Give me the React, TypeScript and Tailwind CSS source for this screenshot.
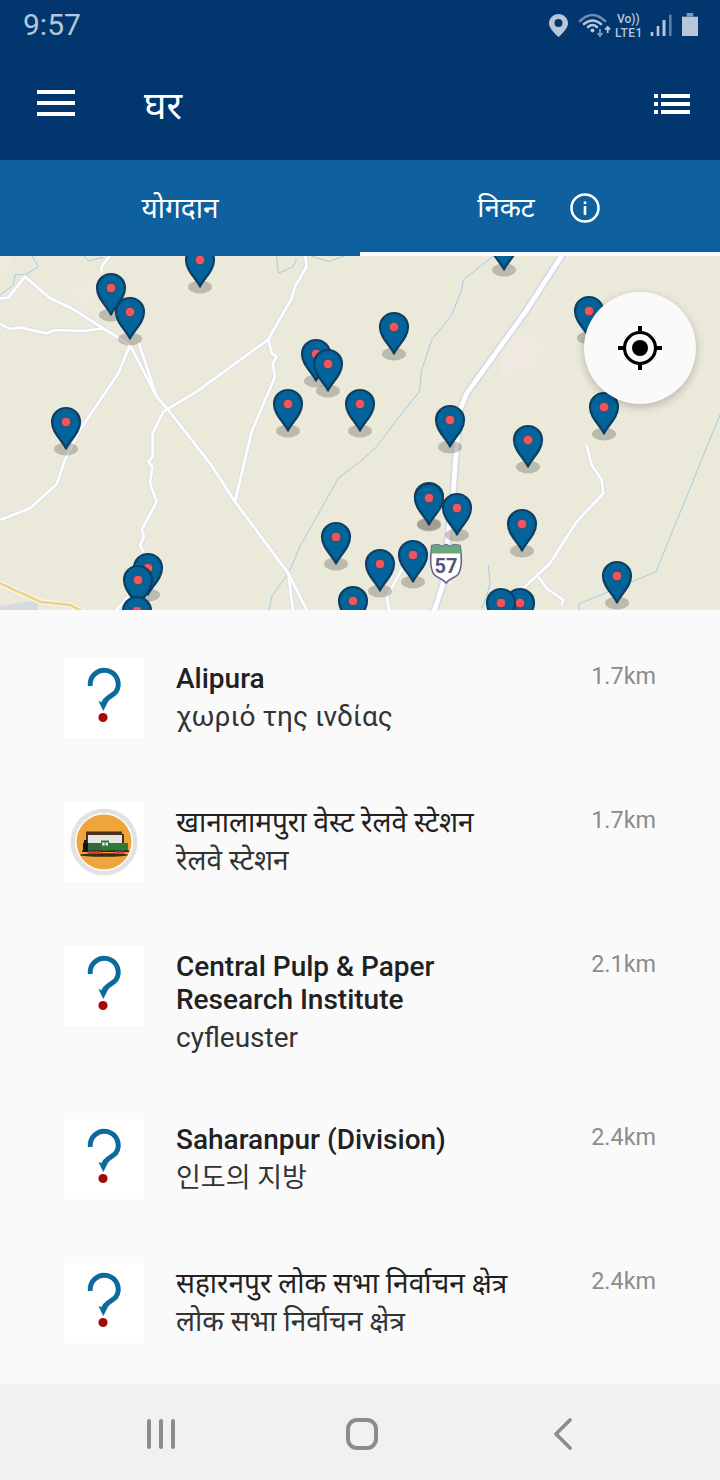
const pins: [number, number][] = [
  [504, 243], [200, 260], [111, 288], [589, 311], [130, 312], [394, 327], [316, 354], [328, 364],
  [288, 404], [360, 404], [604, 407], [450, 420], [66, 422], [528, 440], [429, 497], [429, 498], [457, 508],
  [522, 524], [336, 537], [413, 555], [148, 568], [380, 564], [617, 576], [138, 580], [353, 601],
  [520, 603], [501, 603], [137, 611],
];

const roadsLeft = [
  "M0 145L25 143L75 80L150 145L215 175L310 235L390 285L470 440L505 480L630 640L705 755L865 970L880 1090",
  "M865 970L925 1090",
  "M0 222L30 237L60 232L140 250L165 240L250 243L310 235",
  "M0 810L90 775L170 703L195 630L240 540L355 370L390 285",
  "M415 275L470 440",
  "M915 10L920 50L885 110L875 145L805 268L590 425L490 485L458 550L458 620L445 635L457 650L450 700L470 755L425 840L432 860L420 885L430 905",
  "M805 268L815 310L830 320L818 340L825 380L755 545L705 755",
  "M335 10L305 50L305 68",
  "M345 1085L385 1040",
];
const waterLeft = [
  "M0 135L40 105L45 75L80 72L115 50L95 15",
  "M250 15L265 32L310 22",
  "M830 15L835 70L880 50L890 25",
  "M925 15L985 35L1040 15",
  "M1080 635L1015 685L900 890L865 970L815 1040L805 1090",
];
const roadsRight = [
  "M90 1090L80 1040L130 950",
  "M680 585L695 645L725 690L730 730L650 815L570 940L490 1015L460 1040",
  "M535 980L560 1015L610 1050L605 1065",
];
const waterRight = [
  "M400 18L310 90L305 120L275 195L215 270L185 360L178 425L110 510L50 590L0 635",
  "M1090 470L888 965L655 1063L660 1090",
  "M385 945L390 1000L380 1040L365 1075",
];

function MapCanvas() {
  return (
    <svg viewBox="0 256 720 354" className="block w-full h-[354px]">
      <rect x="0" y="256" width="720" height="354" fill="#ebe9d9" />
      <path d="M0 256H12L8 275L0 278Z" fill="#efe9e0" />
      <path d="M70 293L100 270L97 293L80 307Z" fill="#efe9e0" />
      <path d="M500 343L527 333L545 347L537 367L500 378Z" fill="#efe9e0" />
      <path d="M0 606L38 600V610H0Z" fill="#d7d9e0" />
      <g transform="translate(0 250) scale(.33333)" fill="none" strokeLinejoin="round">
        {waterLeft.map((d) => <path key={d} d={d} stroke="#a4cbe3" strokeWidth="3" />)}
        {roadsLeft.map((d) => <path key={d} d={d} stroke="#d9dde8" strokeWidth="13" />)}
        {roadsLeft.map((d) => <path key={d + "w"} d={d} stroke="#ffffff" strokeWidth="8" />)}
        <path d="M0 1000L120 1055L210 1065L250 1085" stroke="#ffffff" strokeWidth="14" />
        <path d="M0 1000L120 1055L210 1065L250 1085" stroke="#ecd48e" strokeWidth="9" />
      </g>
      <g transform="translate(360 250) scale(.33333)" fill="none" strokeLinejoin="round">
        {waterRight.map((d) => <path key={d} d={d} stroke="#a4cbe3" strokeWidth="3" />)}
        {roadsRight.map((d) => <path key={d} d={d} stroke="#d9dde8" strokeWidth="13" />)}
        {roadsRight.map((d) => <path key={d + "w"} d={d} stroke="#ffffff" strokeWidth="8" />)}
        <path d="M610 10L500 180L320 430L300 480L285 650L280 730L265 850L250 1000L220 1090" stroke="#d5d9e6" strokeWidth="24" />
        <path d="M610 10L500 180L320 430L300 480L285 650L280 730L265 850L250 1000L220 1090" stroke="#ffffff" strokeWidth="14" />
      </g>
      {pins.map(([x, y]) => (
        <ellipse key={`s${x}-${y}`} cx={x} cy={y + 27} rx="12" ry="6.5" fill="#7c7a6e" fillOpacity="0.42" />
      ))}
      {pins.map(([x, y]) => (
        <g key={`${x}-${y}`} transform={`translate(${x} ${y})`}>
          <path d="M0 26.5C-3 19 -14 11 -14 0A14 14 0 0 1 14 0C14 11 3 19 0 26.5Z" fill="#03649c" stroke="#0c3f63" strokeWidth="2.200" strokeLinejoin="round" />
          <circle r="4.8" fill="#f4545a" stroke="#1c4a6b" strokeWidth="0.8" />
        </g>
      ))}
      <g transform="translate(446 563.500)">
        <path d="M-14 -18L-8 -19L-4 -17L0 -19L4 -17L8 -19L14 -18C16 -6 16 5 12 11C8 15 3 15 0 19.500C-3 15 -8 15 -12 11C-16 5 -16 -6 -14 -18Z" fill="#ffffff" stroke="#66668c" strokeWidth="1.6" />
        <path d="M-14 -18L-8 -19L-4 -17L0 -19L4 -17L8 -19L14 -18L15 -10H-15Z" fill="#6aa77f" />
        <text x="0" y="9" textAnchor="middle" fontSize="20" fontWeight="700" fill="#55557a" fontFamily="Roboto, sans-serif">57</text>
      </g>
    </svg>
  );
}

function QuestionIcon() {
  return (
    <div className="w-20 h-20 bg-white shrink-0">
      <svg viewBox="0 0 80 80" className="w-20 h-20 block">
        <path d="M26.300 28A14 14 0 1 1 51.700 34.200C48 38.500 41 39.500 39.500 46" fill="none" stroke="#0d6a9e" strokeWidth="5" />
        <path d="M35 43.500L39.300 52.500L44.500 42L39.500 45Z" fill="#0d6a9e" stroke="#0d6a9e" strokeWidth="0.6" />
        <circle cx="39" cy="59.500" r="4.600" fill="#a30a0a" />
      </svg>
    </div>
  );
}

function TrainIcon() {
  return (
    <div className="w-20 h-20 bg-white shrink-0">
      <svg viewBox="0 0 80 80" className="w-20 h-20 block">
        <circle cx="40" cy="40" r="33.500" fill="#e2e2e2" />
        <circle cx="40" cy="40" r="29" fill="#ffffff" />
        <circle cx="40" cy="40" r="27.500" fill="#eea53c" />
        <rect x="22" y="33" width="38" height="14" fill="#e6e6e2" />
        <rect x="22" y="32" width="2" height="10" fill="#4a3420" />
        <rect x="58" y="32" width="2" height="10" fill="#4a3420" />
        <rect x="22" y="29.500" width="36" height="3.500" fill="#4a2f1a" />
        <ellipse cx="40" cy="53" rx="24" ry="1.800" fill="#3d2a14" />
        <rect x="19" y="41" width="6" height="8" fill="#141414" />
        <rect x="20" y="38" width="2.500" height="5" fill="#141414" />
        <rect x="24" y="41" width="14" height="8" fill="#2f6b34" />
        <rect x="37" y="38.500" width="8" height="10" fill="#2f7a3a" />
        <rect x="38.200" y="40.500" width="2.400" height="3" fill="#f4f4f4" />
        <rect x="41.600" y="40.500" width="2.400" height="3" fill="#f4f4f4" />
        <rect x="45" y="41" width="19" height="8" fill="#2f7a3a" />
        <rect x="18" y="48.500" width="47" height="1.500" fill="#1a1a1a" />
        {[25.500, 29, 32.500, 36, 52, 55.500, 59].map((x) => <circle key={x} cx={x} cy="50.500" r="1.700" fill="#d83a34" />)}
      </svg>
    </div>
  );
}

const rows = [
  { t: ["Alipura"], s: "χωριό της ινδίας", d: "1.7km" },
  { t: ["खानालामपुरा वेस्ट रेलवे स्टेशन"], s: "रेलवे स्टेशन", d: "1.7km", train: true, plain: true },
  { t: ["Central Pulp & Paper", "Research Institute"], s: "cyfleuster", d: "2.1km" },
  { t: ["Saharanpur (Division)"], s: "인도의 지방", d: "2.4km", ko: true },
  { t: ["सहारनपुर लोक सभा निर्वाचन क्षेत्र"], s: "लोक सभा निर्वाचन क्षेत्र", d: "2.4km", plain: true },
];

const font = "font-['Roboto','Noto_Sans','Noto_Sans_Devanagari','Noto_Sans_CJK_KR',sans-serif]";

export default function App() {
  return (
    <div className={`w-[720px] h-[1480px] flex flex-col overflow-hidden bg-[#fafafa] ${font}`}>
      <div className="h-[160px] shrink-0 bg-[#01376e] flex flex-col">
        <div className="h-[50px] flex items-center justify-between pl-[23px] pr-[22px]">
          <span className="text-[30px] leading-[50px] text-[#b8c6d9] font-['Roboto',sans-serif]">9:57</span>
          <svg width="150" height="30" viewBox="0 0 150 30" className="block mt-[4px]">
            <path d="M10.500 2C5.500 2 1 6 1 11.500C1 17 10.500 25 10.500 25S20 17 20 11.500C20 6 15.500 2 10.500 2Z" fill="#b9c6d9" />
            <circle cx="10.500" cy="11" r="4" fill="#01376e" />
            <g fill="none" strokeLinecap="round">
              <path d="M32 9Q44.500 -3 57 9" stroke="#6f8cae" strokeWidth="2.600" />
              <path d="M36 12Q44.500 5 53 12" stroke="#b9c6d9" strokeWidth="2.600" />
              <path d="M40 15Q44.500 11 49 15" stroke="#b9c6d9" strokeWidth="2.600" />
            </g>
            <circle cx="44.500" cy="18.500" r="2" fill="#b9c6d9" />
            <path d="M52 17V24M49.500 21L52 24L54.500 21" stroke="#7e98b6" strokeWidth="1.800" fill="none" />
            <path d="M59.700 21V15M57.200 17.500L59.700 15L62.200 17.500" stroke="#b9c6d9" strokeWidth="1.800" fill="none" />
            <text x="69" y="10.500" fontSize="12" fill="#b9c6d9" fontFamily="Roboto, sans-serif" fontWeight="500">Vo))</text>
            <text x="67" y="24.500" fontSize="12" letterSpacing="0.5" fill="#b9c6d9" fontFamily="Roboto, sans-serif" fontWeight="500">LTE1</text>
            <rect x="102.700" y="20" width="2.600" height="4" fill="#b9c6d9" />
            <rect x="108.700" y="14" width="2.600" height="10" fill="#b9c6d9" />
            <rect x="114.500" y="8" width="3" height="16" fill="#b9c6d9" />
            <rect x="121" y="2.700" width="2.600" height="21.300" fill="#5f7fa3" />
            <rect x="134" y="4.700" width="16" height="19.300" fill="#b9c6d9" />
            <rect x="138.700" y="1" width="6.500" height="3.700" fill="#7e98b6" />
          </svg>
        </div>
        <div className="flex-1 flex items-center pl-[37px] pr-[30px] pb-[2px]">
          <div className="w-[38px] h-[26px] flex flex-col justify-between mt-[-2px]">
            <div className="h-[4px] bg-white" />
            <div className="h-[4px] bg-white" />
            <div className="h-[4px] bg-white" />
          </div>
          <span className="ml-[69px] mt-[4px] text-[38px] leading-[44px] text-white">घर</span>
          <div className="ml-auto w-[36px] h-[20px] flex flex-col justify-between">
            {[0, 1, 2].map((i) => (
              <div key={i} className="flex gap-[3px] h-[4px]">
                <div className="w-[4px] bg-white" />
                <div className="flex-1 bg-white" />
              </div>
            ))}
          </div>
        </div>
      </div>

      <div className="h-[96px] shrink-0 bg-[#0e609e] flex text-white text-[28px]">
        <div className="w-1/2 flex items-center justify-center pt-[2px]">
          <span className="leading-[36px]">योगदान</span>
        </div>
        <div className="w-1/2 flex items-center justify-center border-b-[4px] border-white pt-[4px] pr-[3px] gap-[35px]">
          <span className="leading-[36px] text-[27.500px]">निकट</span>
          <svg width="30" height="30" viewBox="0 0 30 30">
            <circle cx="15" cy="15" r="13.500" fill="none" stroke="#fff" strokeWidth="2.600" />
            <rect x="13.700" y="13" width="2.600" height="9" fill="#fff" />
            <rect x="13.700" y="8.500" width="2.600" height="2.600" fill="#fff" />
          </svg>
        </div>
      </div>

      <div className="relative h-[354px] shrink-0">
        <MapCanvas />
        <div className="absolute left-[584px] top-[36px] w-[112px] h-[112px] rounded-full bg-[#fafafa] shadow-[0_3px_10px_rgba(0,0,0,0.22)] flex items-center justify-center">
          <svg width="46" height="46" viewBox="0 0 46 46">
            <circle cx="23" cy="23" r="15.500" fill="none" stroke="#000" strokeWidth="3.200" />
            <circle cx="23" cy="23" r="8" fill="#000" />
            <path d="M23 1V7M23 39V45M1 23H7M39 23H45" stroke="#000" strokeWidth="4" />
          </svg>
        </div>
      </div>

      <div className="flex-1 pt-[48px] pl-[64px] pr-[64px] flex flex-col gap-[64px]">
        {rows.map((r) => (
          <div key={r.t[0]} className="flex items-start">
            {r.train ? <TrainIcon /> : <QuestionIcon />}
            <div className="ml-[32px] pt-[4px] flex-1 min-w-0">
              <div className={`text-[28px] leading-[33px] text-[#212121] ${r.plain ? "" : "font-medium"}`}>
                {r.t.map((l) => <div key={l}>{l}</div>)}
              </div>
              <div className={`mt-[5px] leading-[34px] text-[#333333] ${r.ko ? "text-[27px]" : "text-[28px]"}`}>{r.s}</div>
            </div>
            <div className="pt-[2px] text-[23.400px] leading-[32px] text-[#8c8c8c]">{r.d}</div>
          </div>
        ))}
      </div>

      <div className="h-[96px] shrink-0 bg-[#f1f1f1] flex items-center pt-[4px]">
        <div className="ml-[147px] flex gap-[8px] h-[30px]">
          <div className="w-[4px] rounded-full bg-[#8c8c8c]" />
          <div className="w-[4px] rounded-full bg-[#8c8c8c]" />
          <div className="w-[4px] rounded-full bg-[#8c8c8c]" />
        </div>
        <div className="ml-[171px] w-[32px] h-[32px] rounded-[11px] border-[4px] border-[#8c8c8c]" />
        <svg width="20" height="32" viewBox="0 0 20 32" className="ml-[175px]">
          <path d="M17 2L3 16L17 30" fill="none" stroke="#8c8c8c" strokeWidth="3.600" strokeLinecap="round" strokeLinejoin="round" />
        </svg>
      </div>
    </div>
  );
}
